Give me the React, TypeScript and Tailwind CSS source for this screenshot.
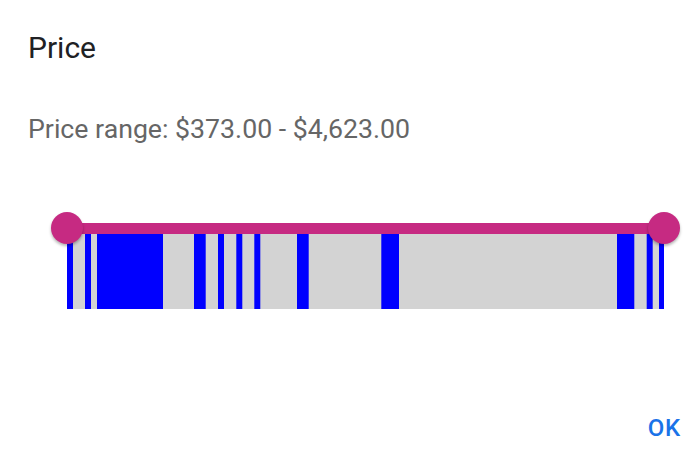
import React from "react";

// price histogram bins: [x, width] in px along the track
const bins: [number, number][] = [
  [0, 6],
  [18, 6],
  [30, 66],
  [127, 11.7],
  [151, 6],
  [169.3, 6],
  [187.3, 6],
  [230, 11.7],
  [314.3, 17.7],
  [550, 17.3],
  [579.7, 6],
  [592, 5.3],
];

function Thumb({ side }: { side: "left" | "right" }) {
  return (
    <span
      className={
        "absolute top-[-11px] h-8 w-8 rounded-full bg-[#c62a82] shadow-[0_2px_3px_rgba(0,0,0,0.3)] " +
        (side === "left" ? "left-[-16px]" : "right-[-16px]")
      }
    />
  );
}

export default function App() {
  return (
    <div className="flex h-[458px] w-[700px] flex-col bg-white font-['Roboto',sans-serif]">
      <h1 className="ml-7 pt-[30px] text-[30px] leading-9 text-[#202124]">Price</h1>
      <p className="ml-7 mt-[47px] text-[26.7px] leading-8 text-[#666666]">
        Price range: $373.00 - $4,623.00
      </p>

      <div className="relative ml-[67px] mt-[78px] w-[597px]">
        <div className="h-[11px] bg-[#c62a82]" />
        <svg width="597" height="75" viewBox="0 0 597 75" className="block">
          <rect x="0" y="0" width="597" height="75" fill="#d3d3d3" />
          {bins.map(([x, w]) => (
            <rect key={x} x={x} y="0" width={w} height="75" fill="#0000ff" />
          ))}
        </svg>
        <Thumb side="left" />
        <Thumb side="right" />
      </div>

      <div className="mt-auto flex justify-end pb-[16px] pr-[19px]">
        <button className="text-[24px] font-medium leading-7 tracking-[0.03em] text-[#1a73e8]">
          OK
        </button>
      </div>
    </div>
  );
}
